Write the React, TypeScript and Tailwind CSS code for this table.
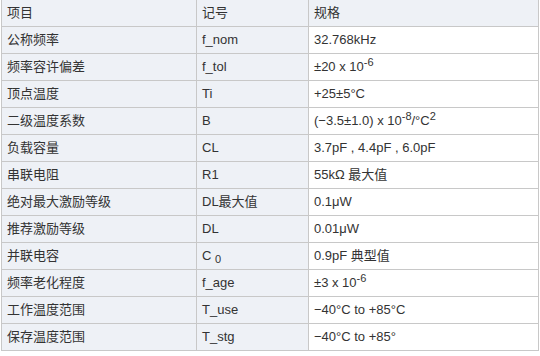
const sup = "text-[11px]";

const rows: [string, React.ReactNode, React.ReactNode][] = [
  ["公称频率", "f_nom", "32.768kHz"],
  ["频率容许偏差", "f_tol", <>±20 x 10<sup className={sup}>-6</sup></>],
  ["顶点温度", "Ti", "+25±5°C"],
  [
    "二级温度系数",
    "B",
    <>(−3.5±1.0) x 10<sup className={sup}>-8</sup>/°C<sup className={sup}>2</sup></>,
  ],
  ["负载容量", "CL", "3.7pF , 4.4pF , 6.0pF"],
  ["串联电阻", "R1", "55kΩ 最大值"],
  ["绝对最大激励等级", "DL最大值", "0.1μW"],
  ["推荐激励等级", "DL", "0.01μW"],
  ["并联电容", <>C <sub className="text-[11px]">0</sub></>, "0.9pF 典型值"],
  ["频率老化程度", "f_age", <>±3 x 10<sup className={sup}>-6</sup></>],
  ["工作温度范围", "T_use", "−40°C to +85°C"],
  ["保存温度范围", "T_stg", "−40°C to +85°"],
];

export default function App() {
  return (
    <div className="w-[540px] h-[356px] bg-white overflow-hidden">
      <table
        className="ml-px -mt-px w-[538px] table-fixed border-collapse text-[13px] leading-[26px] text-[#333]"
        style={{ fontFamily: '"Liberation Sans", Arial, "Noto Sans CJK SC", sans-serif' }}
      >
        <colgroup>
          <col className="w-[195px]" />
          <col className="w-[112px]" />
          <col />
        </colgroup>
        <thead>
          <tr className="h-[27px] bg-[#eef1f6]">
            <th className="border border-[#c8c8c8] px-[5px] text-left font-normal">项目</th>
            <th className="border border-[#c8c8c8] px-[5px] text-left font-normal">记号</th>
            <th className="border border-[#c8c8c8] px-[5px] text-left font-normal">规格</th>
          </tr>
        </thead>
        <tbody>
          {rows.map(([name, sym, spec]) => (
            <tr key={name} className="h-[27px]">
              <td className="border border-[#c8c8c8] bg-[#eef1f6] px-[5px] whitespace-nowrap">{name}</td>
              <td className="border border-[#c8c8c8] bg-[#eef1f6] px-[5px] whitespace-nowrap">{sym}</td>
              <td className="border border-[#c8c8c8] bg-white px-[5px] whitespace-nowrap">{spec}</td>
            </tr>
          ))}
        </tbody>
      </table>
    </div>
  );
}
